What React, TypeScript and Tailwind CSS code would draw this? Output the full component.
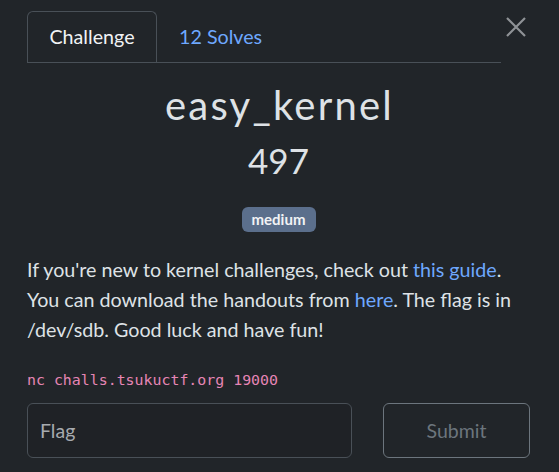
import React from "react";

export default function App() {
  return (
    <div
      className="w-[559px] h-[472px] bg-[#212529] text-[#dee2e6] overflow-hidden"
      style={{ fontFamily: "Lato, 'Noto Sans', sans-serif" }}
    >
      <div className="pl-[27px] pr-[29px] pt-[11px]">
        <div className="flex items-start">
          <div className="w-[474px] flex border-b border-[#495057]">
            <div className="h-[51px] w-[130px] flex items-center justify-center text-[19.7px] text-[#f1f3f5] border border-[#495057] border-b-0 rounded-t-[6px] bg-[#212529] -mb-px relative">
              Challenge
            </div>
            <div className="h-[51px] pl-[22px] flex items-center text-[19.7px] text-[#6ea8fe]">
              12 Solves
            </div>
          </div>
          <button className="ml-[3px] w-[24px] h-[24px] mt-[4px] flex items-center justify-center">
            <svg width="20" height="20" viewBox="0 0 20 20">
              <path d="M1 1 L19 19 M19 1 L1 19" stroke="#8f9296" strokeWidth="2.2" />
            </svg>
          </button>
        </div>

        <div className="flex flex-col items-center">
          <h1 className="mt-[18px] text-[40px] leading-[48px] font-normal tracking-[2.2px] pl-[2px] text-[#dee2e6]">
            easy_kernel
          </h1>
          <div className="mt-[10px] text-[35px] leading-[42px] font-normal text-[#dee2e6]">
            497
          </div>
          <span className="mt-[26px] h-[25px] w-[74px] flex items-center justify-center rounded-[6px] bg-[#5b6f8c] text-[15px] font-bold text-[#f1f3f5]">
            medium
          </span>
        </div>

        <p className="mt-[23px] text-[19.7px] leading-[30px] text-[#dee2e6]">
          If you're new to kernel challenges, check out{" "}
          <a className="text-[#6ea8fe]">this guide</a>.<br />
          You can download the handouts from{" "}
          <a className="text-[#6ea8fe]">here</a>. The flag is in /dev/sdb. Good luck and have fun!
        </p>

        <div
          className="mt-[25px] text-[14.9px] leading-[20px] text-[#e685b5]"
          style={{ fontFamily: "'DejaVu Sans Mono', monospace" }}
        >
          nc challs.tsukuctf.org 19000
        </div>

        <div className="mt-[13px] flex gap-[31px]">
          <div className="w-[325px] h-[55px] rounded-[6px] border border-[#495057] bg-[#1f2226] flex items-center px-[12px] text-[19.5px] text-[#a7abaf]">
            Flag
          </div>
          <div className="w-[147px] h-[55px] rounded-[6px] border border-[#6c757d] flex items-center justify-center text-[19.5px] text-[#6c757d]">
            Submit
          </div>
        </div>
      </div>
    </div>
  );
}
